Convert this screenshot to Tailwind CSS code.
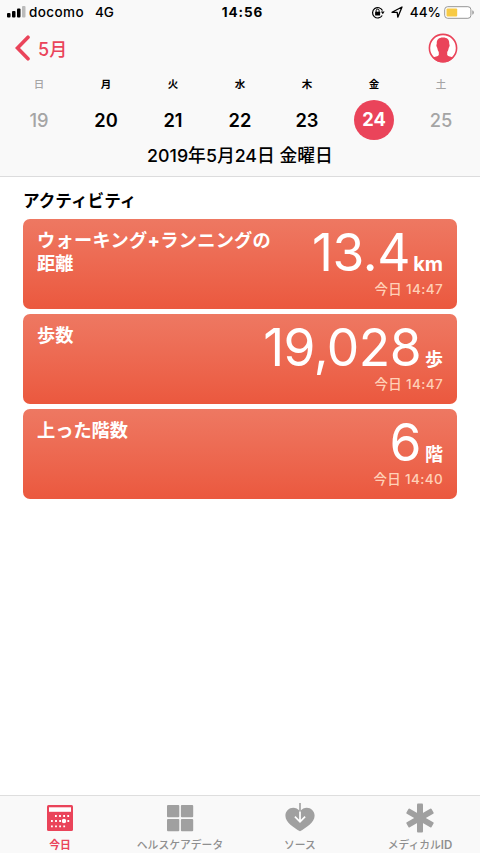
<!DOCTYPE html>
<html lang="ja">
<head>
<meta charset="utf-8">
<title>ヘルスケア</title>
<script src="https://cdn.jsdelivr.net/npm/@tailwindcss/browser@4"></script>
</head>
<body class="w-[480px] h-[853px] overflow-hidden bg-white text-black flex flex-col font-['Inter','Noto_Sans_CJK_JP',sans-serif]">
<header class="h-[177px] shrink-0 bg-[#f9f9f9] border-b border-[#dcdcdd] flex flex-col">
  <div class="h-6 grid grid-cols-[1fr_auto_1fr] items-center pl-[7px] pr-[6px] text-[13.5px] leading-6 font-medium">
    <div class="flex items-center">
      <svg class="w-[19px] h-3 mr-[3px]" viewBox="0 0 19 12"><rect x="0" y="7" width="3.5" height="4.5" rx="1"/><rect x="5" y="5" width="3.5" height="6.5" rx="1"/><rect x="10" y="2.5" width="3.5" height="9" rx="1"/><rect x="15" y="0" width="3.5" height="11.5" rx="1" fill="#bbb"/></svg>
      <span class="tracking-[0.4px]">docomo</span><span class="ml-[11px]">4G</span>
    </div>
    <span class="font-bold tracking-[0.9px] pl-[4px]">14:56</span>
    <div class="flex items-center justify-end">
      <svg class="w-[14px] h-[13px] mr-[6px]" viewBox="0 0 14 13" fill="none" stroke="#000"><path d="M11.2 9.5A5.2 5.2 0 1 1 11.5 4.6" stroke-width="1.2"/><path d="M9.8 5.4h3.8l-1.8 2.8z" fill="#000" stroke="none"/><rect x="4.1" y="5.8" width="5" height="3.7" rx=".5" fill="#000" stroke="none"/><path d="M5.1 6V4.7a1.5 1.5 0 0 1 3 0V6" stroke-width="1"/></svg>
      <svg class="w-3 h-3 mr-[7px]" viewBox="0 0 12 12" fill="none" stroke="#000" stroke-width="1.3" stroke-linejoin="round"><path d="M1 6.3 11 1 6.8 11.2 6.2 6.4z"/></svg>
      <span class="mr-[3px]">44%</span>
      <svg class="w-[30px] h-[13px]" viewBox="0 0 30 13"><rect x=".7" y=".7" width="26.2" height="11.6" rx="3" fill="#fff" stroke="#969696"/><rect x="2.5" y="2.5" width="10.7" height="8" rx="1" fill="#f7ca45"/><path d="M28.3 4.3q1.5.5 1.5 2.2t-1.5 2.2z" fill="#969696"/></svg>
    </div>
  </div>
  <nav class="h-[48px] flex items-center justify-between pl-[15px] pr-[22px] text-[#ea445a]">
    <div class="flex items-center">
      <svg class="w-[15px] h-[26px]" viewBox="0 0 15 26" fill="none" stroke="currentColor" stroke-width="3.6" stroke-linecap="round"><path d="M13 2.2 2.5 13 13 23.8"/></svg>
      <span class="ml-2 pt-[3px] text-[18px] font-medium leading-6">5月</span>
    </div>
    <svg class="w-[30px] h-[30px]" viewBox="0 0 30 30" fill="currentColor"><circle cx="15" cy="15" r="13.6" fill="#fff" stroke="currentColor" stroke-width="1.6"/><path d="M15 4.6C10.3 4.6 8.4 7.2 8.8 11.2c-.8.2-.5 2.3.5 3.7.3 2 .9 3.1 1.5 4.1v3c-.7 1.4-4.1 1.8-6.3 2.6A13.6 13.6 0 0 0 25.5 24.6C23.3 23.8 19.9 23.4 19.2 22v-3c.6-1 1.2-2.1 1.5-4.1 1-1.4 1.3-3.5.5-3.7.4-4-1.5-6.6-6.2-6.6z"/></svg>
  </nav>
  <div class="grid grid-cols-7 mx-[5.5px] text-center text-[10.5px] leading-[25px] h-6 font-bold">
    <span class="text-[#a5a5a5] font-medium">日</span><span>月</span><span>火</span><span>水</span><span>木</span><span>金</span><span class="text-[#a5a5a5] font-medium">土</span>
  </div>
  <div class="grid grid-cols-7 mx-[5.5px] h-[48px] items-center justify-items-center text-[18.3px] font-semibold leading-[39px]">
    <span class="text-[#a5a5a5] font-medium">19</span><span>20</span><span>21</span><span>22</span><span>23</span><span class="size-10 rounded-full bg-[#ea445a] text-white text-center font-bold">24</span><span class="text-[#a5a5a5] font-medium">25</span>
  </div>
  <h1 class="text-center text-[17.8px] leading-[24px] font-medium">2019年5月24日 金曜日</h1>
</header>
<main class="flex-1 px-[23px] pt-[12px]">
  <h2 class="text-[16.6px] leading-[25px] h-[30px] font-bold">アクティビティ</h2>
  <div class="flex flex-col gap-[5px] text-white">
    <section class="h-[90px] rounded-[7px] bg-linear-to-b from-[#ee7862] to-[#eb583e] flex justify-between px-[14px]">
      <h3 class="pt-[10px] text-[18.2px] leading-[23px] font-bold whitespace-nowrap"><span class="tracking-[0.3px]">ウォーキング<span class="font-extrabold">+</span>ランニングの</span><br>距離</h3>
      <div class="text-right pt-[5px]"><div class="h-[56px] leading-[56px] whitespace-nowrap"><span class="text-[51.5px] font-normal tracking-[-0.4px]">13.4</span><span class="text-[20px] font-bold ml-[3px]">km</span></div><p class="text-[13.5px] font-medium tracking-[0.35px] leading-[18px] text-[#ffd1b8]">今日 14:47</p></div>
    </section>
    <section class="h-[90px] rounded-[7px] bg-linear-to-b from-[#ee7862] to-[#eb583e] flex justify-between px-[14px]">
      <h3 class="pt-[10px] text-[18.2px] leading-[23px] font-bold">歩数</h3>
      <div class="text-right pt-[5px]"><div class="h-[56px] leading-[56px] whitespace-nowrap"><span class="text-[51.5px] font-normal tracking-[-0.5px]">19,028</span><span class="text-[18px] font-bold ml-1">歩</span></div><p class="text-[13.5px] font-medium tracking-[0.35px] leading-[18px] text-[#ffd1b8]">今日 14:47</p></div>
    </section>
    <section class="h-[90px] rounded-[7px] bg-linear-to-b from-[#ee7862] to-[#eb583e] flex justify-between px-[14px]">
      <h3 class="pt-[10px] text-[18.2px] leading-[23px] font-bold">上った階数</h3>
      <div class="text-right pt-[5px]"><div class="h-[56px] leading-[56px] whitespace-nowrap"><span class="text-[51.5px] font-normal tracking-[-0.5px]">6</span><span class="text-[18px] font-bold ml-1">階</span></div><p class="text-[13.5px] font-medium tracking-[0.35px] leading-[18px] text-[#ffd1b8]">今日 14:40</p></div>
    </section>
  </div>
</main>
<footer class="h-[58px] shrink-0 bg-[#f9f9f9] border-t border-[#dedede] grid grid-cols-4 text-[10.8px] leading-[17px] font-medium text-[#8f8f8f] text-center">
  <div class="flex flex-col items-center pt-[7px] text-[#ea445a]">
    <svg class="size-[30px] mb-1" viewBox="0 0 30 30" fill="currentColor"><rect x="2" y="2" width="26" height="26" rx="1.5"/><path fill="#fff" d="M4 4.3h22v4.5H4z"/><path stroke="#fff" stroke-width="1.8" stroke-dasharray="1.8 2.3" d="M10 13h14.3M6 18h18.3M6 23.3h14.2"/><circle cx="19" cy="18" r="2.2" fill="#fff"/></svg>
    <span class="font-bold">今日</span>
  </div>
  <div class="flex flex-col items-center pt-[7px]">
    <svg class="size-[30px] mb-1" viewBox="0 0 30 30" fill="#a0a0a0"><rect x="2" y="2" width="12.3" height="12.3" rx="1"/><rect x="15.9" y="2" width="12.3" height="12.3" rx="1"/><rect x="2" y="15.9" width="12.3" height="12.3" rx="1"/><rect x="15.9" y="15.9" width="12.3" height="12.3" rx="1"/></svg>
    <span>ヘルスケアデータ</span>
  </div>
  <div class="flex flex-col items-center pt-[7px]">
    <svg class="size-[30px] mb-1" viewBox="0 0 30 30" fill="none"><path fill="#a0a0a0" d="M15 28.3C9 24.6.4 19.4.4 12.7.4 5.4 9.6 1.3 15 8.3 20.4 1.3 29.6 5.4 29.6 12.7 29.6 19.4 21 24.6 15 28.3z"/><path stroke="#a0a0a0" stroke-width="1.6" d="M15 0v9"/><path stroke="#fff" stroke-width="1.7" d="M15 8.5v10M9.9 13.7 15 18.8l5.1-5.1"/></svg>
    <span>ソース</span>
  </div>
  <div class="flex flex-col items-center pt-[7px]">
    <svg class="size-[30px] mb-1" viewBox="0 0 30 30" fill="#a0a0a0"><rect x="12" y=".5" width="6" height="29" rx="1"/><rect x="12" y=".5" width="6" height="29" rx="1" transform="rotate(60 15 15)"/><rect x="12" y=".5" width="6" height="29" rx="1" transform="rotate(120 15 15)"/></svg>
    <span>メディカル<span class="font-semibold text-[11.5px]">ID</span></span>
  </div>
</footer>
</body>
</html>
